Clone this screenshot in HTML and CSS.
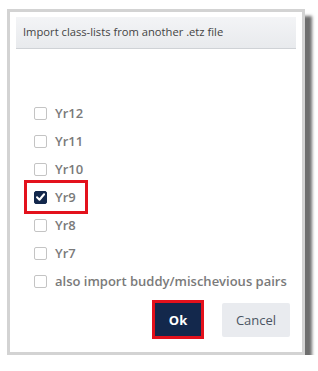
FILE: index.html
```html
<!DOCTYPE html>
<html>
<head>
<meta charset="utf-8">
<link rel="stylesheet" href="styles.css">
</head>
<body>
<div class="frame">
  <div class="header">Import class-lists from another .etz file</div>
  <div class="list">
    <label class="row"><span class="box"></span><span class="txt">Yr12</span></label>
    <label class="row"><span class="box"></span><span class="txt">Yr11</span></label>
    <label class="row"><span class="box"></span><span class="txt">Yr10</span></label>
    <label class="row hl"><span class="box checked"><svg viewBox="0 0 12 12" width="12" height="12"><path d="M2.2 6.3 L4.9 9 L9.9 3" fill="none" stroke="#fff" stroke-width="2.2" stroke-linecap="round" stroke-linejoin="round"/></svg></span><span class="txt">Yr9</span></label>
    <label class="row"><span class="box"></span><span class="txt">Yr8</span></label>
    <label class="row"><span class="box"></span><span class="txt">Yr7</span></label>
    <label class="row"><span class="box"></span><span class="txt">also import buddy/mischevious pairs</span></label>
  </div>
  <div class="actions">
    <div class="okwrap"><button class="btn ok">Ok</button></div>
    <button class="btn cancel">Cancel</button>
  </div>
</div>
</body>
</html>
```
FILE: styles.css
```css
html, body {
  margin: 0;
  padding: 0;
  background: #fff;
}
body {
  font-family: "Open Sans", "Noto Sans", sans-serif;
}
.frame {
  margin: 9px 0 0 7px;
  border: 3px solid #d3d3d3;
  box-shadow: 7px 7px 3px #6e6e6e;
  background: #fff;
  padding: 5px 6px 0 6px;
  box-sizing: content-box;
  width: 280px;
  height: 335px;
  display: flex;
  flex-direction: column;
}
.header {
  height: 31px;
  border-bottom: 1px solid #cfd2d6;
  background: linear-gradient(#f3f4f6, #e8eaed);
  font-size: 11.2px;
  color: #444;
  padding-left: 7px;
  line-height: 30px;
}
.list {
  display: flex;
  flex-direction: column;
  padding: 50px 0 0 18px;
}
.row {
  display: flex;
  align-items: center;
  height: 28px;
  gap: 8px;
  box-sizing: border-box;
  width: max-content;
}
.row.hl {
  outline: 3px solid #e3111c;
  margin-left: -7px;
  padding-left: 7px;
  padding-right: 9px;
}
.box {
  width: 11px;
  height: 11px;
  border: 1px solid #c4c4c4;
  border-radius: 2px;
  background: #fff;
  display: flex;
  align-items: center;
  justify-content: center;
  overflow: hidden;
}
.box.checked {
  background: #13284c;
  border-color: #13284c;
}
.txt {
  font-size: 13px;
  font-weight: 600;
  color: #7a7a7a;
}
.actions {
  display: flex;
  justify-content: flex-end;
  align-items: center;
  gap: 18px;
  margin-top: 5px;
  padding-right: 6px;
}
.okwrap {
  border: 3px solid #e3111c;
  display: flex;
}
.btn {
  font-family: "Open Sans", sans-serif;
  font-size: 13px;
  border: none;
  border-radius: 2px;
  padding: 0;
  height: 33px;
}
.ok {
  width: 46px;
  background: #13284c;
  color: #fff;
  font-weight: 700;
  border-radius: 0;
}
.cancel {
  width: 68px;
  height: 34px;
  background: #e9ebef;
  color: #4b5563;
}
```
